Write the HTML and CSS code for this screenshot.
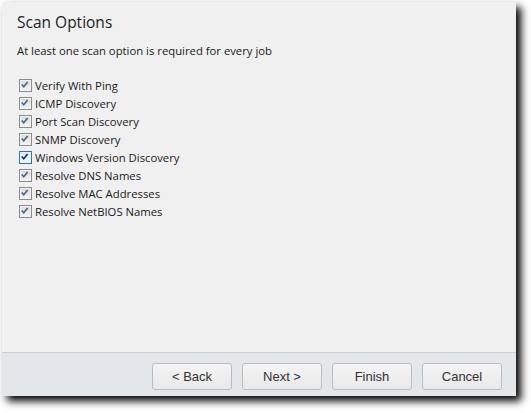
FILE: index.html
```html
<!DOCTYPE html>
<html>
<head>
<meta charset="utf-8">
<link rel="stylesheet" href="styles.css">
</head>
<body>
<div class="window">
  <div class="content">
    <h1 class="title">Scan Options</h1>
    <p class="subtitle">At least one scan option is required for every job</p>
    <ul class="options">
      <li class="option"><span class="cb"><svg viewBox="0 0 13 13" width="13" height="13"><path d="M3 6.3 L5.4 9 L10 3.3" /></svg></span>Verify With Ping</li>
      <li class="option"><span class="cb"><svg viewBox="0 0 13 13" width="13" height="13"><path d="M3 6.3 L5.4 9 L10 3.3" /></svg></span>ICMP Discovery</li>
      <li class="option"><span class="cb"><svg viewBox="0 0 13 13" width="13" height="13"><path d="M3 6.3 L5.4 9 L10 3.3" /></svg></span>Port Scan Discovery</li>
      <li class="option"><span class="cb"><svg viewBox="0 0 13 13" width="13" height="13"><path d="M3 6.3 L5.4 9 L10 3.3" /></svg></span>SNMP Discovery</li>
      <li class="option"><span class="cb cb-active"><svg viewBox="0 0 13 13" width="13" height="13"><path d="M3 6.3 L5.4 9 L10 3.3" /></svg></span>Windows Version Discovery</li>
      <li class="option"><span class="cb"><svg viewBox="0 0 13 13" width="13" height="13"><path d="M3 6.3 L5.4 9 L10 3.3" /></svg></span>Resolve DNS Names</li>
      <li class="option"><span class="cb"><svg viewBox="0 0 13 13" width="13" height="13"><path d="M3 6.3 L5.4 9 L10 3.3" /></svg></span>Resolve MAC Addresses</li>
      <li class="option"><span class="cb"><svg viewBox="0 0 13 13" width="13" height="13"><path d="M3 6.3 L5.4 9 L10 3.3" /></svg></span>Resolve NetBIOS Names</li>
    </ul>
  </div>
  <div class="footer">
    <button class="btn">&lt; Back</button>
    <button class="btn">Next &gt;</button>
    <button class="btn">Finish</button>
    <button class="btn">Cancel</button>
  </div>
</div>
</body>
</html>
```
FILE: styles.css
```css
html, body {
  margin: 0;
  padding: 0;
  background: #ffffff;
}
body {
  width: 531px;
  height: 413px;
  overflow: hidden;
}
.window {
  margin: 2px 0 0 2px;
  width: 514px;
  height: 394px;
  background: #f0f0f0;
  display: flex;
  flex-direction: column;
  box-shadow: 5px 5px 8px rgba(0, 0, 0, 1);
  font-family: "Open Sans", "DejaVu Sans", sans-serif;
  color: #1a1a1a;
}
.content {
  flex: 1;
  padding: 10px 0 0 15px;
}
.title {
  margin: 0;
  font-size: 15.5px;
  font-weight: 400;
  line-height: 20px;
  color: #1e1e1e;
}
.subtitle {
  margin: 11px 0 0 0;
  font-size: 11.3px;
  line-height: 16px;
}
.options {
  list-style: none;
  margin: 17px 0 0 2px;
  padding: 0;
}
.option {
  display: flex;
  align-items: center;
  height: 18px;
  font-size: 11.3px;
}
.cb {
  width: 13px;
  height: 13px;
  box-sizing: border-box;
  margin-right: 3px;
  display: inline-flex;
}
.cb svg {
  display: block;
  background: linear-gradient(#dcdcdc, #f4f4f4);
  border: 1px solid #8c8c8c;
  box-sizing: border-box;
  box-shadow: inset 0 0 0 1px #f2f2f2;
}
.cb path {
  fill: none;
  stroke: #4f6394;
  stroke-width: 2;
  transform: translate(-1px, -1px);
}
.cb-active svg {
  border-color: #2b73b8;
  background: linear-gradient(#d7ecfa, #f4fafe);
}
.cb-active path {
  stroke: #1a2c78;
}
.footer {
  height: 44px;
  border-top: 1px solid #cbcdd0;
  background: #e4e7ea;
  display: flex;
  justify-content: flex-end;
  align-items: flex-start;
  gap: 10px;
  padding: 10px 14px 0 0;
  box-sizing: border-box;
}
.btn {
  width: 80px;
  height: 27px;
  border: 1px solid #bdbdbd;
  border-radius: 3px;
  background: linear-gradient(#f4f4f4, #e9e9e9);
  font-family: "Liberation Sans", Arial, sans-serif;
  font-size: 13px;
  color: #333333;
  padding: 0;
}
```
